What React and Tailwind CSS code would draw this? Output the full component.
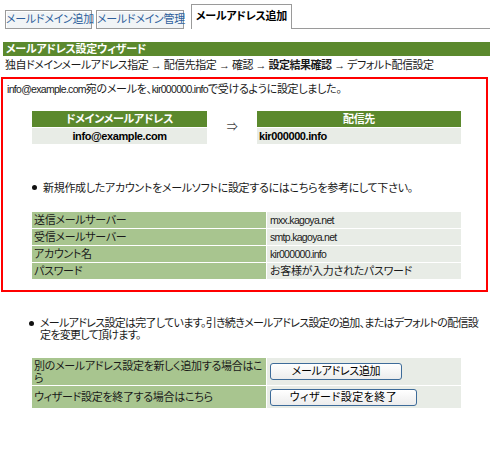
import React from "react";

const Bullet = () => (
  <span className="inline-block w-[5px] h-[5px] rounded-full bg-[#111] mr-[6px] ml-[29px] shrink-0 mt-[4px]" />
);

const L = ({ children }) => (
  <span className="text-[10.5px] tracking-[-0.7px]">{children}</span>
);

export default function App() {
  const rows = [
    ["送信メールサーバー", <L>mxx.kagoya.net</L>],
    ["受信メールサーバー", <L>smtp.kagoya.net</L>],
    ["アカウント名", <L>kir000000.info</L>],
    ["パスワード", "お客様が入力されたパスワード"],
  ];
  return (
    <div className="w-[490px] h-[450px] bg-white text-[11px] tracking-[-0.3px] text-[#1a1a1a] font-['Liberation_Sans','Noto_Sans_CJK_JP',sans-serif] [font-feature-settings:'palt'] overflow-hidden">
      {/* tabs */}
      <div className="flex items-end h-[29px] pt-[4px]">
        <div className="w-[5px]" />
        <div className="w-[87px] h-[19px] border border-[#9a9a9a] bg-[#f1f4f6] shadow-[inset_1px_1px_0_#ffffff] text-[#2f5f9c] leading-[17px] text-center whitespace-nowrap">
          メールドメイン追加
        </div>
        <div className="w-[4px]" />
        <div className="w-[88px] h-[19px] border border-[#9a9a9a] bg-[#f1f4f6] shadow-[inset_1px_1px_0_#ffffff] text-[#2f5f9c] leading-[17px] text-center whitespace-nowrap">
          メールドメイン管理
        </div>
        <div className="w-[7px]" />
        <div className="w-[101px] h-[25px] border border-b-0 border-[#9a9a9a] bg-white font-bold text-black leading-[23px] text-center whitespace-nowrap">
          メールアドレス追加
        </div>
        <div className="flex-1 h-px bg-[#9a9a9a]" />
      </div>

      {/* wizard header */}
      <div className="mt-[13px] ml-[3px] h-[14px] bg-[#5b892d] text-white font-bold leading-[14px] pl-[3px] whitespace-nowrap">
        メールアドレス設定ウィザード
      </div>
      <div className="h-[17px] leading-[18px] pl-[5px] whitespace-nowrap tracking-[-0.5px]">
        独自ドメインメールアドレス指定 → 配信先指定 → 確認 → <span className="font-bold">設定結果確認</span> → デフォルト配信設定
      </div>

      {/* result box */}
      <div className="mt-[4px] ml-[1px] w-[487px] h-[215px] border-2 border-[#ff0000]">
        <div className="pl-[4px] pt-[3px] leading-[14px] whitespace-nowrap">
          <L>info@example.com</L>宛のメールを、<L>kir000000.info</L>で受けるように設定しました。
        </div>
        <div className="mt-[15px] ml-[29px] flex">
          <div className="w-[175px] flex flex-col gap-px">
            <div className="h-[16px] bg-[#5b892d] text-white font-bold text-center leading-[16px]">ドメインメールアドレス</div>
            <div className="h-[16px] bg-[#e8ece6] text-black font-bold text-center leading-[16px] tracking-[-0.4px]">info@example.com</div>
          </div>
          <div className="w-[50px] flex items-center justify-center text-[#444]">⇒</div>
          <div className="w-[204px] flex flex-col gap-px">
            <div className="h-[16px] bg-[#5b892d] text-white font-bold text-center leading-[16px]">配信先</div>
            <div className="h-[16px] bg-[#e8ece6] text-black font-bold pl-[2px] leading-[16px] tracking-[-0.4px]">kir000000.info</div>
          </div>
        </div>

        <div className="mt-[37px] flex items-start leading-[14px] whitespace-nowrap">
          <Bullet />
          <span>新規作成したアカウントをメールソフトに設定するにはこちらを参考にして下さい。</span>
        </div>

        <div className="mt-[17px] ml-[29px] w-[429px] flex flex-col gap-px">
          {rows.map(([k, v]) => (
            <div key={k} className="flex h-[16px] gap-px">
              <div className="w-[234px] bg-[#a8c58f] pl-[2px] leading-[16px]">{k}</div>
              <div className="flex-1 bg-[#e8ece6] pl-[3px] leading-[16px]">{v}</div>
            </div>
          ))}
        </div>
      </div>

      {/* completion */}
      <div className="mt-[25px] flex items-start leading-[12px] tracking-[-0.7px]">
        <Bullet />
        <span className="whitespace-nowrap">
          メールアドレス設定は完了しています。引き続きメールアドレス設定の追加、またはデフォルトの配信設
          <br />
          定を変更して頂けます。
        </span>
      </div>

      <div className="mt-[17px] ml-[32px] w-[429px] flex flex-col gap-px">
        <div className="flex h-[27px] gap-px">
          <div className="w-[234px] bg-[#a8c58f] pl-[2px] leading-[12px] flex items-center whitespace-nowrap">
            <span>
              別のメールアドレス設定を新しく追加する場合はこ
              <br />ら
            </span>
          </div>
          <div className="flex-1 bg-[#e8ece6] pl-[3px] flex items-center">
            <button className="w-[132px] h-[17px] border border-[#3d6b99] rounded-[3px] bg-gradient-to-b from-white to-[#ececec] text-[11px] leading-[15px] text-black">
              メールアドレス追加
            </button>
          </div>
        </div>
        <div className="flex h-[22px] gap-px">
          <div className="w-[234px] bg-[#a8c58f] pl-[2px] flex items-center whitespace-nowrap">
            ウィザード設定を終了する場合はこちら
          </div>
          <div className="flex-1 bg-[#e8ece6] pl-[3px] flex items-center">
            <button className="w-[147px] h-[17px] border border-[#3d6b99] rounded-[3px] bg-gradient-to-b from-white to-[#ececec] text-[11px] leading-[15px] text-black tracking-[0.5px]">
              ウィザード設定を終了
            </button>
          </div>
        </div>
      </div>
    </div>
  );
}
